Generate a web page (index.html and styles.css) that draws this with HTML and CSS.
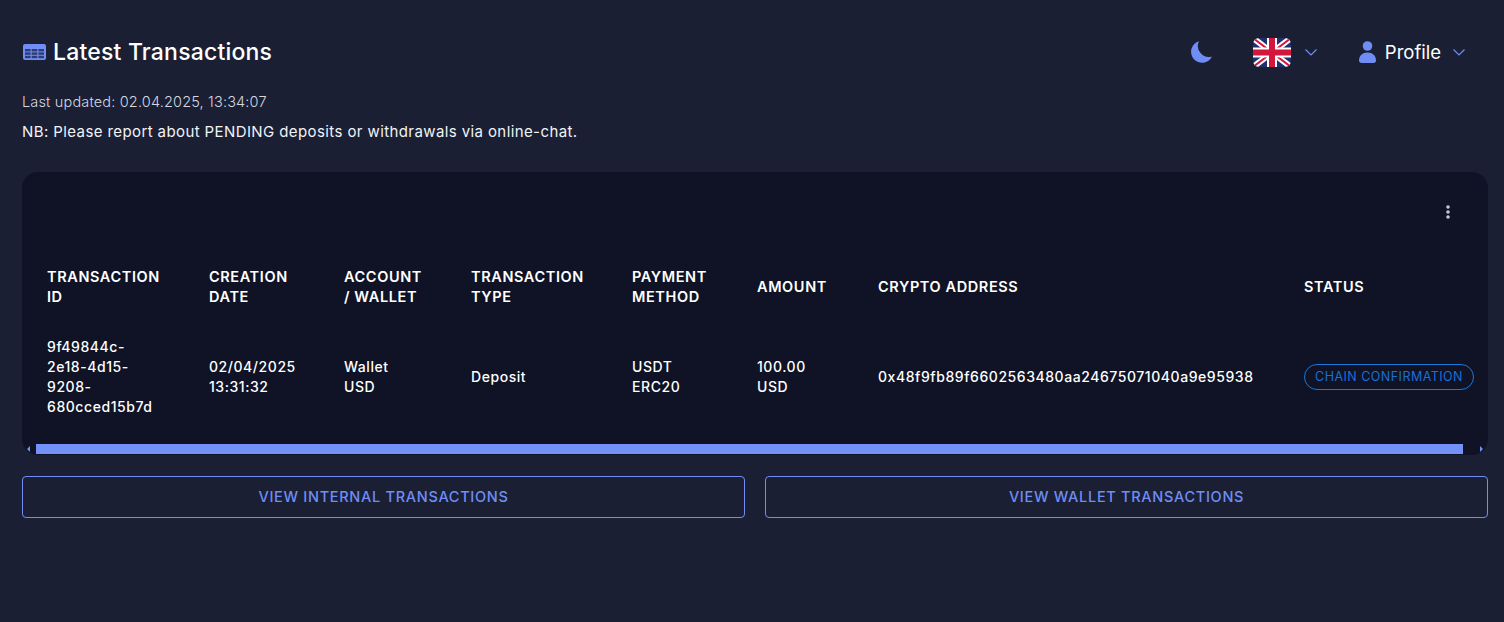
FILE: index.html
```html
<!DOCTYPE html>
<html lang="en">
<head>
<meta charset="utf-8">
<title>Latest Transactions</title>
<link rel="stylesheet" href="styles.css">
</head>
<body>
<header class="topbar">
  <h1 class="title">
    <svg class="title-icon" viewBox="0 0 23 16" width="23" height="16" aria-hidden="true">
      <rect width="23" height="16" rx="2" fill="#6f8df5"/>
      <g fill="#2f3c72">
        <rect x="2" y="5" width="5.6" height="2.4"/><rect x="8.7" y="5" width="5.6" height="2.4"/><rect x="15.4" y="5" width="5.6" height="2.4"/>
        <rect x="2" y="8.4" width="5.6" height="2.4"/><rect x="8.7" y="8.4" width="5.6" height="2.4"/><rect x="15.4" y="8.4" width="5.6" height="2.4"/>
        <rect x="2" y="11.8" width="5.6" height="2.4"/><rect x="8.7" y="11.8" width="5.6" height="2.4"/><rect x="15.4" y="11.8" width="5.6" height="2.4"/>
      </g>
    </svg>
    <span>Latest Transactions</span>
  </h1>
  <div class="actions">
    <svg class="moon" viewBox="0 0 22 22" width="22" height="22" aria-hidden="true">
      <path d="M9 0.2A11 11 0 1 0 22 15.5A11 11 0 0 1 9 0.2Z" fill="#6f8df5"/>
    </svg>
    <div class="lang">
      <svg class="flag" viewBox="0 0 38 29" width="38" height="29" aria-hidden="true">
        <defs><clipPath id="flagclip"><rect width="38" height="29" rx="6"/></clipPath></defs>
        <g clip-path="url(#flagclip)">
          <rect width="38" height="29" fill="#1f2f70"/>
          <path d="M0 0L38 29M38 0L0 29" stroke="#fff" stroke-width="6"/>
          <path d="M0 0L38 29M38 0L0 29" stroke="#d3163c" stroke-width="2"/>
          <path d="M19 0V29M0 14.5H38" stroke="#fff" stroke-width="10"/>
          <path d="M19 0V29M0 14.5H38" stroke="#d3163c" stroke-width="6"/>
        </g>
      </svg>
      <svg class="chev" viewBox="0 0 12 7" width="12" height="7" aria-hidden="true"><path d="M0.5 0.5L6 6L11.5 0.5" fill="none" stroke="#6f8df5" stroke-width="1.2"/></svg>
    </div>
    <div class="profile">
      <svg class="person" viewBox="0 0 17 22" width="17" height="22" aria-hidden="true">
        <circle cx="8.5" cy="5" r="4.8" fill="#6f8df5"/>
        <path d="M0 19.5C0 14.5 3.5 11.5 8.5 11.5S17 14.5 17 19.5C17 21 16 22 14.5 22H2.5C1 22 0 21 0 19.5Z" fill="#6f8df5"/>
      </svg>
      <span class="profile-name">Profile</span>
      <svg class="chev" viewBox="0 0 12 7" width="12" height="7" aria-hidden="true"><path d="M0.5 0.5L6 6L11.5 0.5" fill="none" stroke="#6f8df5" stroke-width="1.2"/></svg>
    </div>
  </div>
</header>
<p class="updated">Last updated: 02.04.2025, 13:34:07</p>
<p class="note">NB: Please report about PENDING deposits or withdrawals via online-chat.</p>

<section class="card">
  <div class="card-tools">
    <svg viewBox="0 0 4 14" width="4" height="14" aria-hidden="true">
      <circle cx="2" cy="2" r="1.8"/><circle cx="2" cy="7" r="1.8"/><circle cx="2" cy="12" r="1.8"/>
    </svg>
  </div>
  <table class="tx">
    <colgroup>
      <col class="c1"><col class="c2"><col class="c3"><col class="c4"><col class="c5"><col class="c6"><col class="c7"><col class="c8">
    </colgroup>
    <thead>
      <tr>
        <th>TRANSACTION<br>ID</th><th>CREATION<br>DATE</th><th>ACCOUNT<br>/ WALLET</th><th>TRANSACTION<br>TYPE</th><th>PAYMENT<br>METHOD</th><th>AMOUNT</th><th>CRYPTO ADDRESS</th><th>STATUS</th>
      </tr>
    </thead>
    <tbody>
      <tr>
        <td>9f49844c-<br>2e18-4d15-<br>9208-<br>680cced15b7d</td>
        <td>02/04/2025<br>13:31:32</td>
        <td>Wallet<br>USD</td>
        <td>Deposit</td>
        <td>USDT<br>ERC20</td>
        <td>100.00<br>USD</td>
        <td>0x48f9fb89f6602563480aa24675071040a9e95938</td>
        <td><span class="badge">CHAIN CONFIRMATION</span></td>
      </tr>
    </tbody>
  </table>
  <div class="scrollbar">
    <span class="arrow arrow-l"></span>
    <span class="thumb"></span>
    <span class="arrow arrow-r"></span>
  </div>
</section>

<div class="buttons">
  <a class="btn" href="#">VIEW INTERNAL TRANSACTIONS</a>
  <a class="btn" href="#">VIEW WALLET TRANSACTIONS</a>
</div>
</body>
</html>
```
FILE: styles.css
```css
* { box-sizing: border-box; }
html, body { height: 100%; }
body {
  margin: 0;
  padding: 0 16px 0 22px;
  background: #1a1f33;
  color: #fff;
  font-family: Inter, "Liberation Sans", sans-serif;
  overflow: hidden;
}
.topbar {
  display: flex;
  align-items: center;
  justify-content: space-between;
  height: 104px;
  margin-bottom: -12px;
  padding-right: 23px;
}
.title {
  display: flex;
  align-items: center;
  gap: 7px;
  margin: 0;
  font-size: 23px;
  font-weight: 500;
  letter-spacing: 0.2px;
  line-height: 28px;
  color: #fff;
}
.title-icon { display: block; margin-left: 1px; }
.actions { display: flex; align-items: center; }
.moon { display: block; margin-right: 41px; }
.lang { display: flex; align-items: center; gap: 14px; margin-right: 42px; }
.flag, .person, .chev { display: block; }
.profile { display: flex; align-items: center; }
.profile-name { font-size: 18.5px; margin: 0 12px 0 9px; font-weight: 400; line-height: 26px; }
.updated {
  margin: 0;
  font-size: 14.5px;
  line-height: 20px;
  font-weight: 300;
  letter-spacing: 0.16px;
  color: #d5d8e0;
}
.note {
  margin: 10px 0 0;
  font-size: 15px;
  line-height: 20px;
  font-weight: 400;
  letter-spacing: 0.4px;
  color: #f1f3f7;
}
.card {
  margin-top: 30px;
  height: 283px;
  background: #0f1325;
  border-radius: 16px;
  overflow: hidden;
}
.card-tools {
  display: flex;
  justify-content: flex-end;
  height: 85px;
  padding: 33px 38px 0 0;
}
.card-tools svg { display: block; fill: #c4c7cf; }
.tx {
  width: 1466px;
  table-layout: fixed;
  border-collapse: collapse;
  font-size: 14px;
  line-height: 20px;
}
.c1 { width: 187px; }
.c2 { width: 135px; }
.c3 { width: 127px; }
.c4 { width: 161px; }
.c5 { width: 125px; }
.c6 { width: 121px; }
.c7 { width: 426px; }
.c8 { width: 184px; }
.tx th {
  height: 60px;
  padding: 0 6px 0 0;
  text-align: left;
  font-size: 14.5px;
  font-weight: 600;
  letter-spacing: 0.6px;
}
.tx td {
  height: 120px;
  padding: 0 6px 0 0;
  font-weight: 500;
  letter-spacing: 0.56px;
}
.tx th:first-child, .tx td:first-child { padding-left: 25px; }
.badge {
  display: inline-block;
  width: 170px;
  height: 26px;
  border: 1px solid #1a78d8;
  border-radius: 13px;
  color: #1b6fd8;
  font-size: 12.5px;
  line-height: 24px;
  font-weight: 400;
  text-align: center;
  letter-spacing: 0.47px;
  white-space: nowrap;
}
.scrollbar {
  display: flex;
  align-items: center;
  height: 11px;
  margin-top: 7px;
  padding: 0 5px 1px;
}
.thumb { flex: 1; height: 10px; background: #7391f7; margin: 0 17px 0 6px; }
.arrow { width: 0; height: 0; border-style: solid; border-color: transparent; }
.arrow-l { border-width: 3.5px 3px 3.5px 0; border-right-color: #7391f7; }
.arrow-r { border-width: 3.5px 0 3.5px 3px; border-left-color: #7391f7; }
.buttons {
  display: grid;
  grid-template-columns: 1fr 1fr;
  gap: 20px;
  margin-top: 21px;
}
.btn {
  display: flex;
  align-items: center;
  justify-content: center;
  height: 42px;
  padding-bottom: 1px;
  border: 1px solid #6f8df5;
  border-radius: 4px;
  color: #6f8df5;
  font-size: 14.5px;
  font-weight: 500;
  letter-spacing: 0.7px;
  text-decoration: none;
}
```
